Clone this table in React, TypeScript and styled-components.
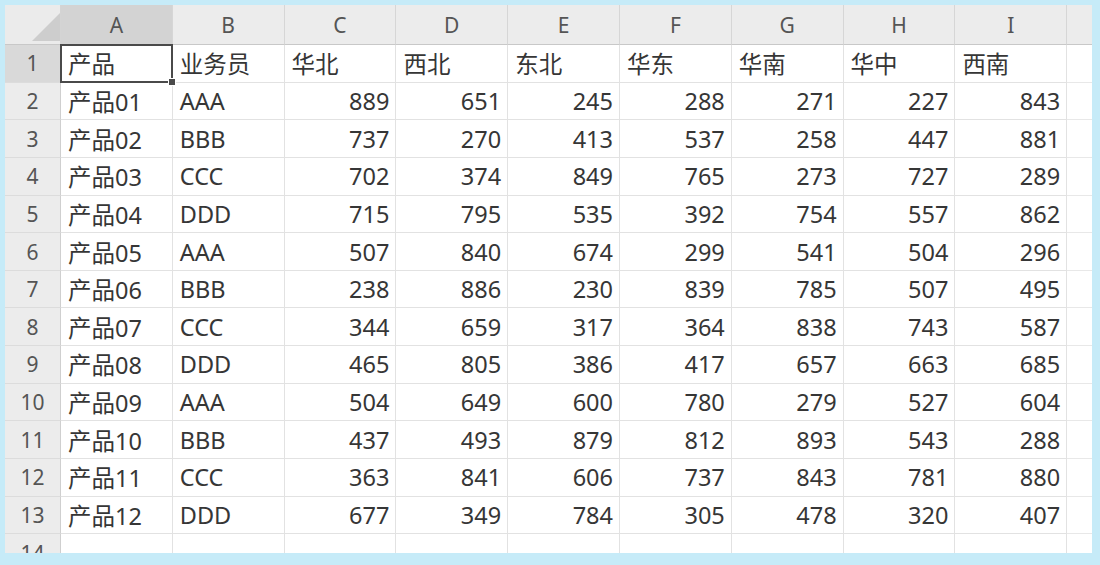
import React from "react";
import styled, { createGlobalStyle, css } from "styled-components";

const Global = createGlobalStyle`
  html, body { margin: 0; padding: 0; background: #c6ebf8; }
  body { font-family: "Noto Sans", "Noto Sans CJK SC", sans-serif; }
`;

const Frame = styled.div`
  width: 1100px;
  height: 565px;
  box-sizing: border-box;
  padding: 5px 8px 12px 5px;
  background: #c6ebf8;
`;

const Sheet = styled.div`
  height: 548px;
  overflow: hidden;
  background: #ffffff;
  display: grid;
  grid-template-columns: 56px repeat(9, 111.8px) 1fr;
  grid-auto-rows: 37.65px;
  grid-template-rows: 40px;
  font-family: "Noto Sans", "Noto Sans CJK SC", sans-serif;
`;

const Corner = styled.div`
  position: relative;
  background: #ebebeb;
  border-right: 1px solid #d4d4d4;
  border-bottom: 1px solid #c8c8c8;
  &::after {
    content: "";
    position: absolute;
    right: 0;
    bottom: 3px;
    width: 0;
    height: 0;
    border-left: 28px solid transparent;
    border-bottom: 28px solid #cdcdcd;
  }
`;

const ColHead = styled.div<{ $active?: boolean }>`
  display: flex;
  align-items: center;
  justify-content: center;
  font-size: 21px;
  color: #555;
  background: ${(p) => (p.$active ? "#d3d3d3" : "#ececec")};
  border-right: 1px solid #d6d6d6;
  border-bottom: 1px solid #c8c8c8;
`;

const RowHead = styled.div<{ $active?: boolean }>`
  display: flex;
  align-items: center;
  justify-content: center;
  font-size: 21px;
  color: #555;
  background: ${(p) => (p.$active ? "#d9d9d9" : "#ececec")};
  border-right: 1px solid #cfcfcf;
  border-bottom: 1px solid #dcdcdc;
`;

const Cell = styled.div<{ $num?: boolean; $selected?: boolean }>`
  position: relative;
  display: flex;
  align-items: center;
  justify-content: ${(p) => (p.$num ? "flex-end" : "flex-start")};
  padding: 0 6px 0 7px;
  font-size: 23.5px;
  color: #363636;
  white-space: nowrap;
  border-right: 1px solid #e2e2e2;
  border-bottom: 1px solid #e2e2e2;
  ${(p) =>
    p.$selected &&
    css`
      &::before {
        content: "";
        position: absolute;
        inset: -1px -1px -1px -1px;
        border: 2px solid #4a4a4a;
        pointer-events: none;
      }
      &::after {
        content: "";
        position: absolute;
        right: -4px;
        bottom: -4px;
        width: 6px;
        height: 6px;
        background: #4a4a4a;
        border: 1px solid #ffffff;
        z-index: 2;
      }
    `}
`;

const Filler = styled.div`
  border-bottom: 1px solid #e8e8e8;
`;

const HeadFiller = styled.div`
  background: #ececec;
  border-bottom: 1px solid #c8c8c8;
`;

const cols = ["A", "B", "C", "D", "E", "F", "G", "H", "I"];
const header = ["产品", "业务员", "华北", "西北", "东北", "华东", "华南", "华中", "西南"];
const data: [string, string, number[]][] = [
  ["产品01", "AAA", [889, 651, 245, 288, 271, 227, 843]],
  ["产品02", "BBB", [737, 270, 413, 537, 258, 447, 881]],
  ["产品03", "CCC", [702, 374, 849, 765, 273, 727, 289]],
  ["产品04", "DDD", [715, 795, 535, 392, 754, 557, 862]],
  ["产品05", "AAA", [507, 840, 674, 299, 541, 504, 296]],
  ["产品06", "BBB", [238, 886, 230, 839, 785, 507, 495]],
  ["产品07", "CCC", [344, 659, 317, 364, 838, 743, 587]],
  ["产品08", "DDD", [465, 805, 386, 417, 657, 663, 685]],
  ["产品09", "AAA", [504, 649, 600, 780, 279, 527, 604]],
  ["产品10", "BBB", [437, 493, 879, 812, 893, 543, 288]],
  ["产品11", "CCC", [363, 841, 606, 737, 843, 781, 880]],
  ["产品12", "DDD", [677, 349, 784, 305, 478, 320, 407]],
];

export default function App() {
  return (
    <Frame>
      <Global />
      <Sheet>
        <Corner />
        {cols.map((c) => (
          <ColHead key={c} $active={c === "A"}>
            {c}
          </ColHead>
        ))}
        <HeadFiller />

        <RowHead $active>1</RowHead>
        {header.map((h, i) => (
          <Cell key={h} $selected={i === 0}>
            {h}
          </Cell>
        ))}
        <Filler />

        {data.map(([p, s, nums], r) => (
          <React.Fragment key={p}>
            <RowHead>{r + 2}</RowHead>
            <Cell>{p}</Cell>
            <Cell>{s}</Cell>
            {nums.map((n, i) => (
              <Cell key={i} $num>
                {n}
              </Cell>
            ))}
            <Filler />
          </React.Fragment>
        ))}

        <RowHead>14</RowHead>
        {cols.map((c) => (
          <Cell key={c} />
        ))}
        <Filler />
      </Sheet>
    </Frame>
  );
}
